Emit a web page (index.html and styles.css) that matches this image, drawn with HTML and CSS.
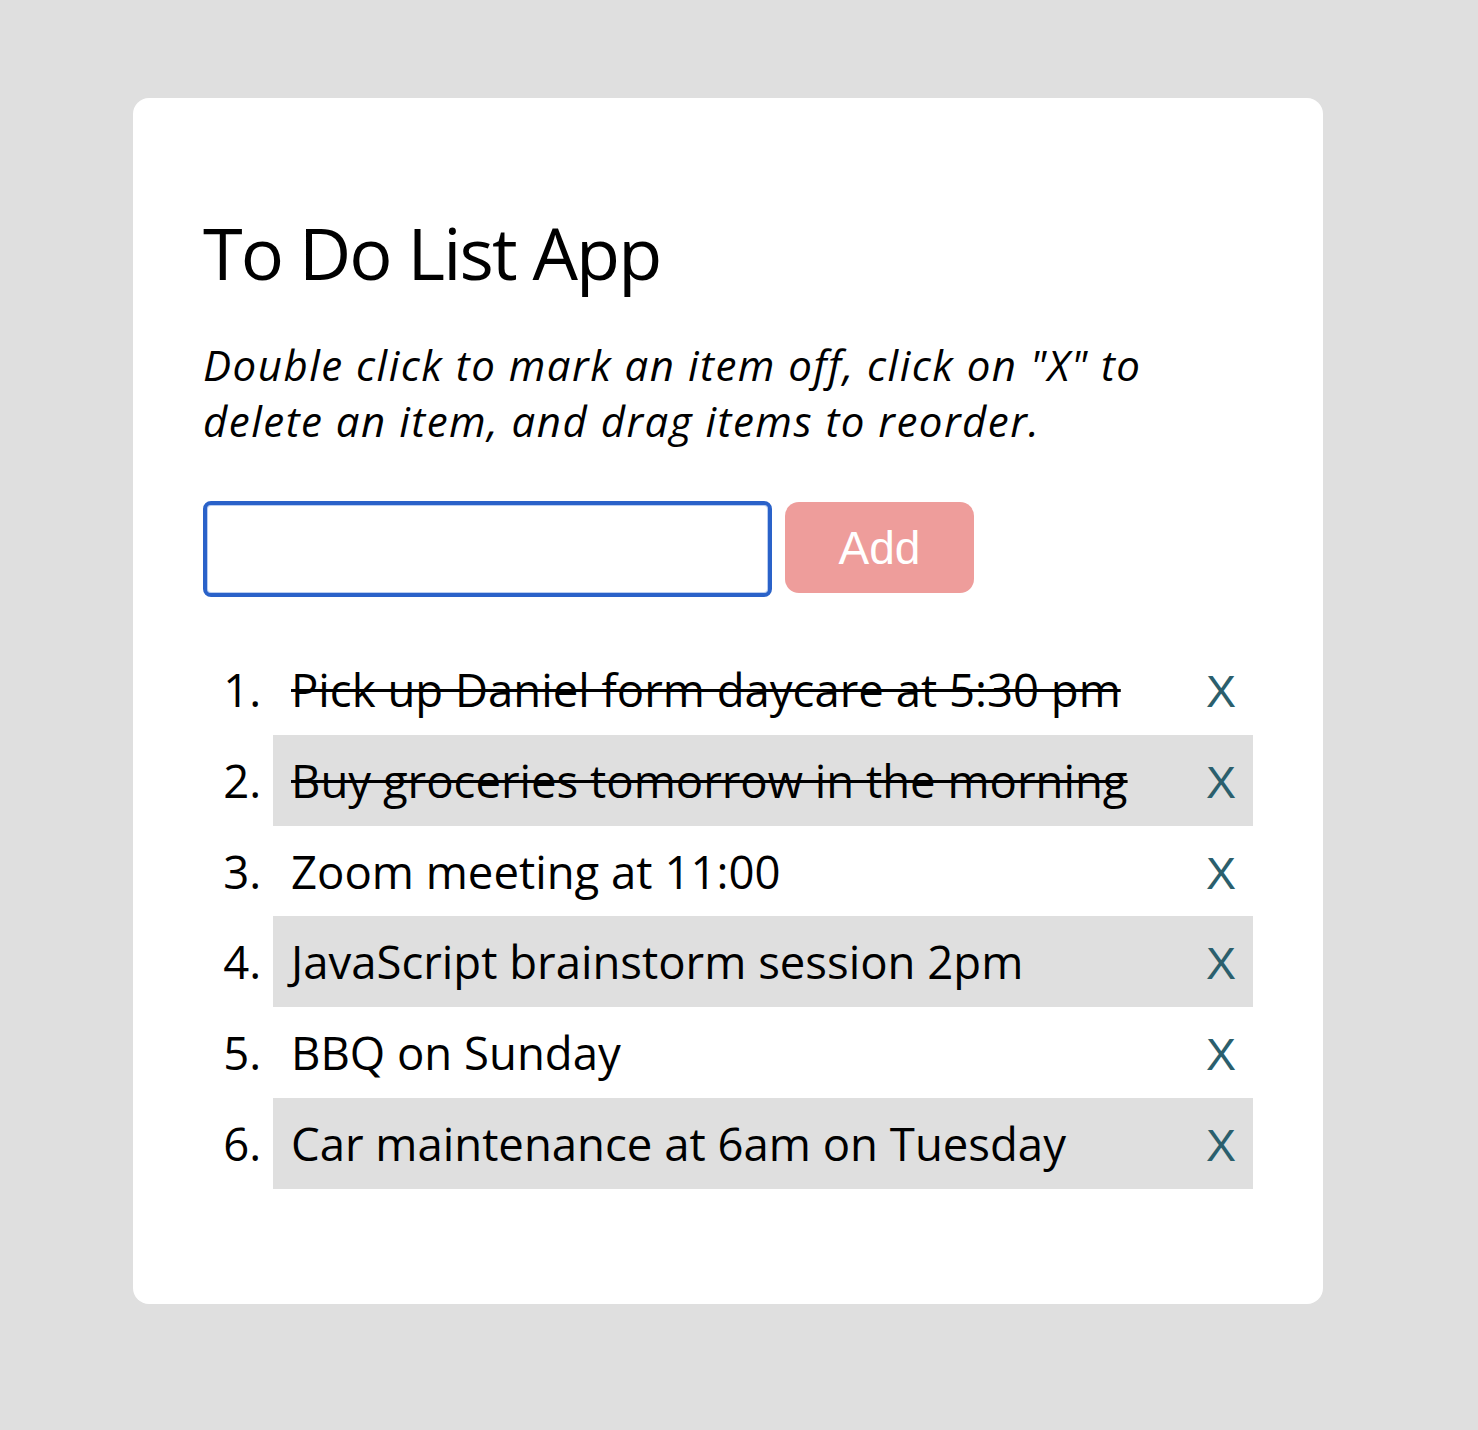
FILE: index.html
```html
<!DOCTYPE html>
<html lang="en">
<head>
<meta charset="utf-8">
<title>To Do List App</title>
<link rel="stylesheet" href="styles.css">
</head>
<body>
<main class="card">
  <h1 class="title">To Do List App</h1>
  <p class="hint">Double click to mark an item off, click on "X" to delete an item, and drag items to reorder.</p>
  <form class="add-form">
    <input class="add-input" type="text" aria-label="New item">
    <button class="add-btn" type="button">Add</button>
  </form>
  <ol class="todo-list">
    <li class="todo"><div class="todo-row"><span class="todo-text done">Pick up Daniel form daycare at 5:30 pm</span><span class="todo-x">X</span></div></li>
    <li class="todo alt"><div class="todo-row"><span class="todo-text done">Buy groceries tomorrow in the morning</span><span class="todo-x">X</span></div></li>
    <li class="todo"><div class="todo-row"><span class="todo-text">Zoom meeting at 11:00</span><span class="todo-x">X</span></div></li>
    <li class="todo alt"><div class="todo-row"><span class="todo-text">JavaScript brainstorm session 2pm</span><span class="todo-x">X</span></div></li>
    <li class="todo"><div class="todo-row"><span class="todo-text">BBQ on Sunday</span><span class="todo-x">X</span></div></li>
    <li class="todo alt"><div class="todo-row"><span class="todo-text">Car maintenance at 6am on Tuesday</span><span class="todo-x">X</span></div></li>
  </ol>
</main>
</body>
</html>
```

FILE: styles.css
```css
html, body {
  margin: 0;
  padding: 0;
}
body {
  background: #dfdfdf;
  font-family: "Open Sans", "DejaVu Sans", sans-serif;
  color: #000;
  padding: 98px 0 0 133px;
  min-height: 1430px;
  box-sizing: border-box;
}
.card {
  width: 1190px;
  box-sizing: border-box;
  background: #fff;
  border-radius: 16px;
  padding: 70px 70px 115px 70px;
}
.title {
  margin: 35px 0 0 0;
  font-size: 72px;
  font-weight: 400;
  line-height: 98px;
  letter-spacing: -1.9px;
}
.hint {
  width: 1000px;
  margin: 36px 0 0 0;
  font-size: 42px;
  font-style: italic;
  line-height: 56px;
  letter-spacing: 1.5px;
}
.add-form {
  display: flex;
  align-items: flex-start;
  gap: 13px;
  margin-top: 52px;
}
.add-input {
  width: 569px;
  height: 96px;
  box-sizing: border-box;
  border: 4px solid #2a62c9;
  border-radius: 8px;
  box-shadow: inset 0 0 0 1px #b9cdf0;
  margin: 0;
  outline: none;
  background: #fff;
}
.add-btn {
  width: 189px;
  height: 91px;
  margin-top: 1px;
  border: none;
  border-radius: 14px;
  background: #ee9d9b;
  color: #fff;
  font-family: "Liberation Sans", Arial, sans-serif;
  font-size: 46px;
  padding: 0;
}
.todo-list {
  margin: 47px 0 0 0;
  padding: 0 0 0 70px;
  font-size: 45.5px;
}
.todo {
  height: 90.75px;
  box-sizing: border-box;
  padding: 0 17px 0 18px;
  line-height: 90.75px;
}
.todo.alt {
  background: #dfdfdf;
}
.todo-row {
  display: flex;
  justify-content: space-between;
  align-items: baseline;
  height: 90.75px;
}
.todo-text.done {
  text-decoration: line-through;
  text-decoration-thickness: 3px;
}
.todo-x {
  font-family: "Liberation Sans", Arial, sans-serif;
  font-size: 45px;
  color: #2b5f6d;
}
```
